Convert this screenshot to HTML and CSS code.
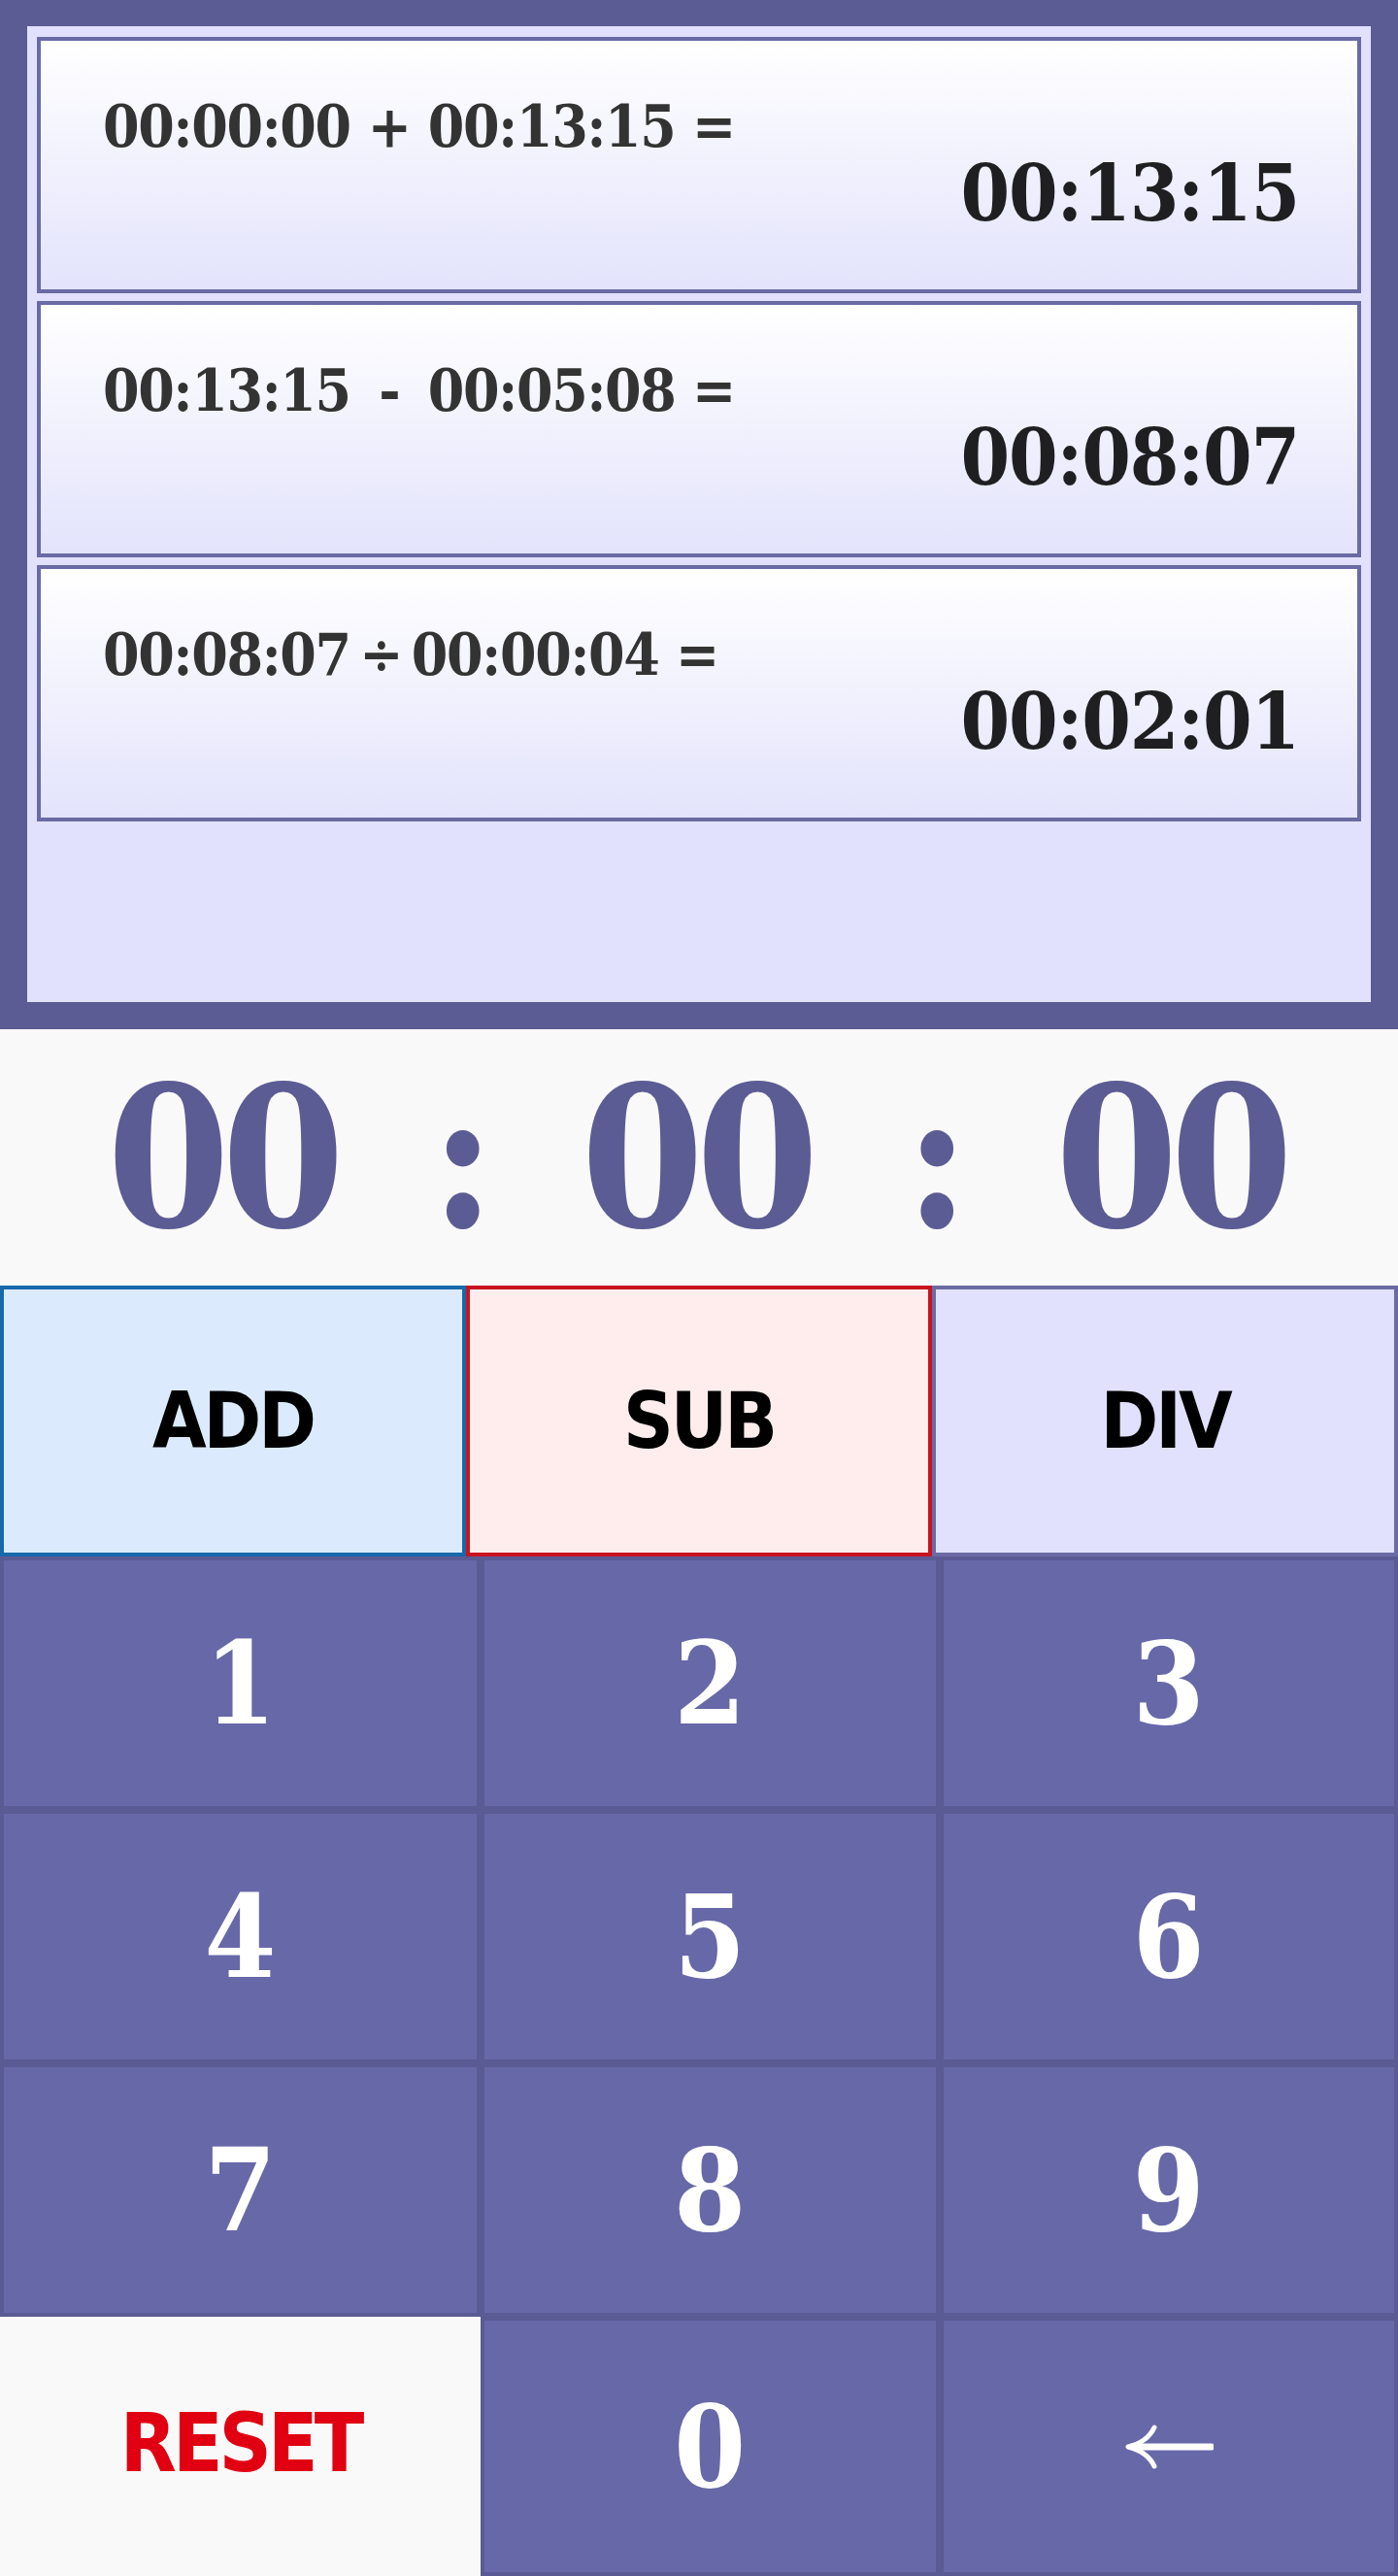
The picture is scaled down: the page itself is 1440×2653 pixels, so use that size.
FILE: index.html
```html
<!DOCTYPE html>
<html>
<head>
<meta charset="utf-8">
<title>Time Calculator</title>
<link rel="stylesheet" href="styles.css">
</head>
<body>
<div class="panel">
  <div class="entry">
    <div class="expr">00:00:00<span class="opr">+</span>00:13:15 =</div>
    <div class="result">00:13:15</div>
  </div>
  <div class="entry">
    <div class="expr">00:13:15<span class="opr">-</span>00:05:08 =</div>
    <div class="result">00:08:07</div>
  </div>
  <div class="entry">
    <div class="expr">00:08:07<span class="opr opr-narrow">÷</span>00:00:04 =</div>
    <div class="result">00:02:01</div>
  </div>
</div>
<div class="display">00 : 00 : 00</div>
<div class="ops">
  <div class="op op-add">ADD</div>
  <div class="op op-sub">SUB</div>
  <div class="op op-div">DIV</div>
</div>
<div class="keys">
  <div class="key">1</div>
  <div class="key">2</div>
  <div class="key">3</div>
  <div class="key">4</div>
  <div class="key">5</div>
  <div class="key">6</div>
  <div class="key">7</div>
  <div class="key">8</div>
  <div class="key">9</div>
  <div class="reset">RESET</div>
  <div class="key">0</div>
  <div class="key key-back">
    <svg class="arrow" width="92" height="46" viewBox="0 0 92 46">
      <path d="M8 23 H90" stroke="#fff" stroke-width="7" stroke-linecap="round" fill="none"/>
      <path d="M31 3 Q24 18 4 23 Q24 28 31 43" stroke="#fff" stroke-width="5" stroke-linecap="round" stroke-linejoin="round" fill="none"/>
    </svg>
  </div>
</div>
</body>
</html>
```
FILE: styles.css
```css
* { box-sizing: border-box; }
html, body { margin: 0; padding: 0; }
body {
  background: #f9f9f9;
  width: 1440px;
  font-family: "DejaVu Serif Condensed", "DejaVu Serif", serif;
  font-stretch: condensed;
}
.panel {
  height: 1060px;
  background: #e1e1fd;
  border: 28px solid #5c5c94;
  border-top-width: 27px;
  padding: 11px 10px 10px 10px;
  display: flex;
  flex-direction: column;
  gap: 8px;
}
.entry {
  height: 264px;
  border: 4px solid #6a6aa5;
  background: linear-gradient(to bottom, #ffffff 0%, #e3e3fc 100%);
  padding: 60px 60px 0 64px;
  display: flex;
  flex-direction: column;
}
.expr {
  font-size: 60px;
  line-height: 56px;
  font-weight: bold;
  color: #333333;
  letter-spacing: -1.3px;
  white-space: pre;
}
.opr {
  display: inline-block;
  width: 80px;
  text-align: center;
}
.opr-narrow { width: 63px; }
.result {
  font-size: 81px;
  line-height: 81px;
  font-weight: bold;
  color: #1f1f22;
  letter-spacing: -1.2px;
  text-align: right;
}
.display {
  height: 264px;
  display: flex;
  align-items: center;
  justify-content: center;
  font-size: 202px;
  line-height: 1;
  font-weight: bold;
  color: #5c5c94;
  letter-spacing: -8px;
  word-spacing: 41px;
  white-space: pre;
  padding-right: 6px;
}
.ops {
  display: grid;
  grid-template-columns: 1fr 1fr 1fr;
  height: 279px;
}
.op {
  border: 4px solid;
  display: flex;
  align-items: center;
  justify-content: center;
  font-family: "DejaVu Sans Condensed", "DejaVu Sans", sans-serif;
  font-stretch: condensed;
  font-weight: bold;
  font-size: 80px;
  letter-spacing: -3px;
  color: #000;
}
.op-add { background: #dbebfd; border-color: #1769aa; }
.op-sub { background: #ffeded; border-color: #c8141f; }
.op-div { background: #e1e1fd; border-color: #6a6aa5; }
.keys {
  display: grid;
  grid-template-columns: 495px 1fr 1fr;
  grid-template-rows: 261px 261px 261px 1fr;
  height: 1050px;
}
.key {
  background: #6768a8;
  border: 4px solid #5a5a94;
  display: flex;
  align-items: center;
  justify-content: center;
  color: #ffffff;
  font-weight: bold;
  font-size: 118px;
  line-height: 1;
}
.reset {
  background: #f9f9f9;
  display: flex;
  align-items: center;
  justify-content: center;
  color: #e00012;
  font-family: "DejaVu Sans Condensed", "DejaVu Sans", sans-serif;
  font-stretch: condensed;
  font-weight: bold;
  font-size: 84px;
  letter-spacing: -4px;
  padding-bottom: 8px;
}
.arrow { display: block; margin-top: 0; }
```
